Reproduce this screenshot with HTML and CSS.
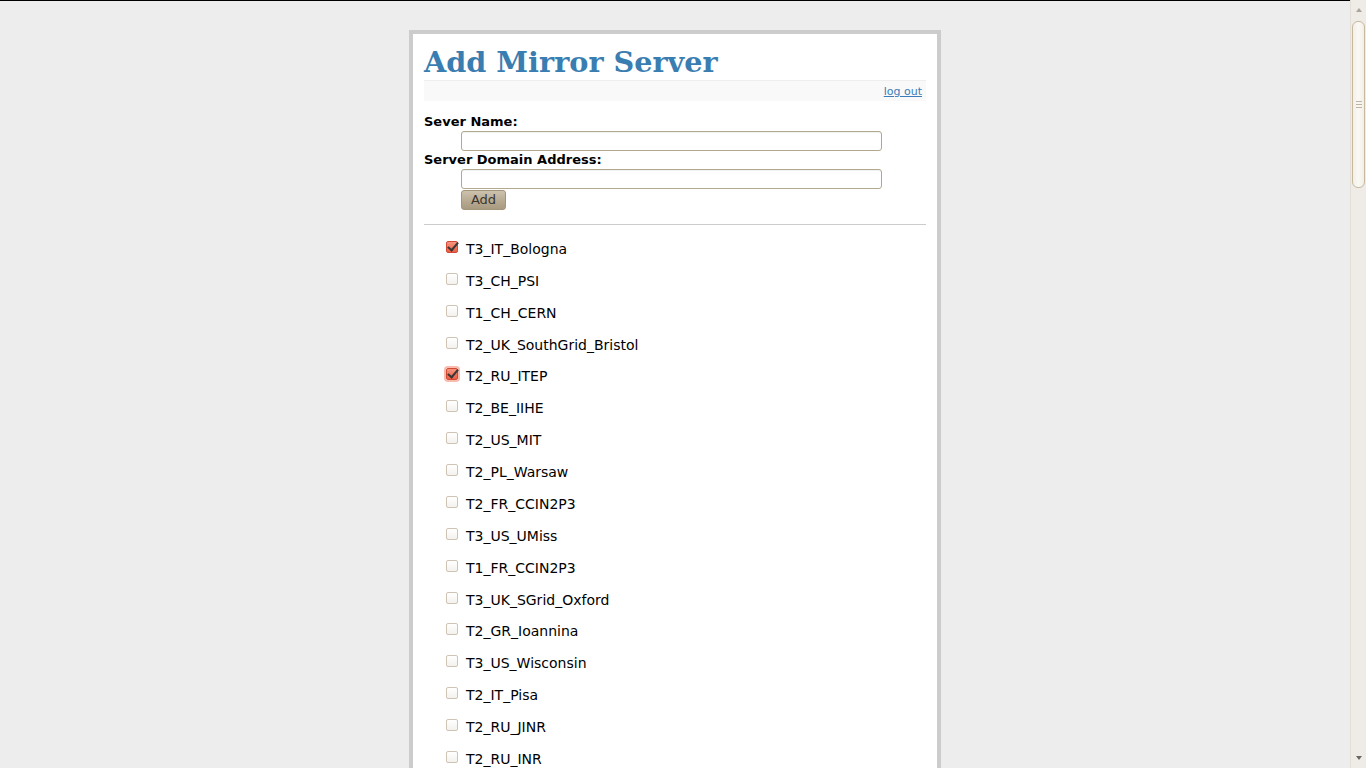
FILE: index.html
```html
<!DOCTYPE html>
<html>
<head>
<meta charset="utf-8">
<title>Add Mirror Server</title>
<link rel="stylesheet" href="styles.css">
</head>
<body>
<div class="viewport">
  <main class="main">
    <div class="page">
      <h1 class="title">Add Mirror Server</h1>
      <div class="userbar"><a href="#" class="logout">log out</a></div>
      <form class="addform">
        <label class="flabel">Sever Name:</label>
        <input type="text" class="field">
        <label class="flabel">Server Domain Address:</label>
        <input type="text" class="field">
        <button type="button" class="addbtn">Add</button>
      </form>
      <hr class="sep">
      <div class="sites">
        <label class="site"><input type="checkbox" class="cb" checked><span>T3_IT_Bologna</span></label>
        <label class="site"><input type="checkbox" class="cb"><span>T3_CH_PSI</span></label>
        <label class="site"><input type="checkbox" class="cb"><span>T1_CH_CERN</span></label>
        <label class="site"><input type="checkbox" class="cb"><span>T2_UK_SouthGrid_Bristol</span></label>
        <label class="site"><input type="checkbox" class="cb focus" checked><span>T2_RU_ITEP</span></label>
        <label class="site"><input type="checkbox" class="cb"><span>T2_BE_IIHE</span></label>
        <label class="site"><input type="checkbox" class="cb"><span>T2_US_MIT</span></label>
        <label class="site"><input type="checkbox" class="cb"><span>T2_PL_Warsaw</span></label>
        <label class="site"><input type="checkbox" class="cb"><span>T2_FR_CCIN2P3</span></label>
        <label class="site"><input type="checkbox" class="cb"><span>T3_US_UMiss</span></label>
        <label class="site"><input type="checkbox" class="cb"><span>T1_FR_CCIN2P3</span></label>
        <label class="site"><input type="checkbox" class="cb"><span>T3_UK_SGrid_Oxford</span></label>
        <label class="site"><input type="checkbox" class="cb"><span>T2_GR_Ioannina</span></label>
        <label class="site"><input type="checkbox" class="cb"><span>T3_US_Wisconsin</span></label>
        <label class="site"><input type="checkbox" class="cb"><span>T2_IT_Pisa</span></label>
        <label class="site"><input type="checkbox" class="cb"><span>T2_RU_JINR</span></label>
        <label class="site"><input type="checkbox" class="cb"><span>T2_RU_INR</span></label>
      </div>
    </div>
  </main>
  <div class="vscroll" aria-hidden="true">
    <div class="sb-btn sb-up"><span class="tri-up"></span></div>
    <div class="sb-track">
      <div class="sb-thumb"><span class="grip"></span></div>
    </div>
    <div class="sb-btn sb-down"><span class="tri-down"></span></div>
  </div>
</div>
</body>
</html>
```

FILE: styles.css
```css
html, body {
  margin: 0;
  padding: 0;
  height: 100%;
  overflow: hidden;
}
body {
  font-family: "DejaVu Sans", sans-serif;
  color: #000;
  background: #ededed;
}
.viewport {
  display: flex;
  height: 100vh;
}
.main {
  flex: 1;
  overflow: hidden;
  border-top: 1px solid #000;
  padding-top: 29px;
  background: #ededed;
}

/* fake GTK scrollbar */
.vscroll {
  width: 16px;
  display: flex;
  flex-direction: column;
  background: #efece7;
  border-left: 1px solid #e4dfd6;
  box-sizing: border-box;
}
.sb-btn {
  height: 17px;
  display: flex;
  justify-content: center;
  align-items: center;
}
.sb-down {
  height: 20px;
}
.tri-up {
  width: 0;
  height: 0;
  border-left: 3px solid transparent;
  border-right: 3px solid transparent;
  border-bottom: 4px solid #aaa49b;
  margin-top: 2px;
}
.tri-down {
  width: 0;
  height: 0;
  border-left: 3px solid transparent;
  border-right: 3px solid transparent;
  border-top: 4px solid #6b6660;
}
.sb-track {
  flex: 1;
  padding: 4px 1px 0 1px;
}
.sb-thumb {
  height: 167px;
  box-sizing: border-box;
  border: 1px solid #c6b99f;
  border-radius: 6px;
  background: linear-gradient(to right, #f3efe8, #fbf9f5 50%, #f2eee7);
  display: flex;
  justify-content: center;
  align-items: center;
}
.grip {
  width: 6px;
  height: 5px;
  border-top: 1px solid #bdb3a3;
  border-bottom: 1px solid #bdb3a3;
  background: linear-gradient(#bdb3a3, #bdb3a3) center / 100% 1px no-repeat;
}

.page {
  width: 502px;
  margin: 0 auto;
  background: #fff;
  border: 4px solid #cccccc;
  padding: 0 11px 20px;
}
.title {
  margin: 0;
  padding-top: 10px;
  height: 36px;
  font-family: "DejaVu Serif", serif;
  font-weight: bold;
  font-size: 28.7px;
  line-height: 36px;
  color: #3a7db1;
}
.userbar {
  background: #f9f9f9;
  border-top: 1px solid #eeeeee;
  height: 20px;
  display: flex;
  justify-content: flex-end;
  align-items: center;
  padding-right: 4px;
}
.logout {
  font-size: 11px;
  color: #3a7db8;
  text-decoration: underline;
  line-height: 13px;
}
.addform {
  display: flex;
  flex-direction: column;
  align-items: flex-start;
  padding-top: 13px;
}
.flabel {
  font-weight: bold;
  font-size: 13px;
  line-height: 15px;
}
.field {
  box-sizing: border-box;
  width: 421px;
  height: 20px;
  margin: 2px 0 1px 37px;
  border: 1px solid #b2a78f;
  border-radius: 3px;
  background: #fff;
  box-shadow: inset 0 1px 1px rgba(0,0,0,0.06);
  padding: 0 3px;
  font-family: "DejaVu Sans", sans-serif;
  font-size: 13px;
}
.addbtn {
  box-sizing: border-box;
  margin-left: 37px;
  width: 45px;
  height: 20px;
  border: 1px solid #a29479;
  border-radius: 3px;
  background: linear-gradient(to bottom, #cdc2ae, #b6a88f 60%, #a99b80);
  color: #3a3630;
  font-family: "DejaVu Sans", sans-serif;
  font-size: 13px;
  line-height: 16px;
  padding: 0;
}
.sep {
  border: 0;
  border-top: 1px solid #cccccc;
  margin: 14px 0 8px;
  height: 0;
}
.sites {
  display: flex;
  flex-direction: column;
}
.site {
  height: 31.875px;
  display: flex;
  align-items: center;
  padding-left: 22px;
  font-size: 14px;
  cursor: default;
}
.cb {
  -webkit-appearance: none;
  appearance: none;
  box-sizing: border-box;
  width: 12px;
  height: 12px;
  margin: 0 8px 0 0;
  position: relative;
  top: -2px;
  border: 1px solid #cfc4b3;
  border-radius: 2px;
  background: linear-gradient(to bottom, #ffffff, #f4f2ee);
}
.cb:checked {
  border-color: #d24a33;
  background: linear-gradient(to bottom, #f6957f, #ea5f45);
}
.cb:checked::after {
  content: "";
  position: absolute;
  left: 3px;
  top: -2px;
  width: 4px;
  height: 9px;
  border-right: 2px solid #3b3734;
  border-bottom: 2px solid #3b3734;
  transform: rotate(40deg);
}
.cb.focus {
  box-shadow: 0 0 0 2px #f8bcae;
}
```
